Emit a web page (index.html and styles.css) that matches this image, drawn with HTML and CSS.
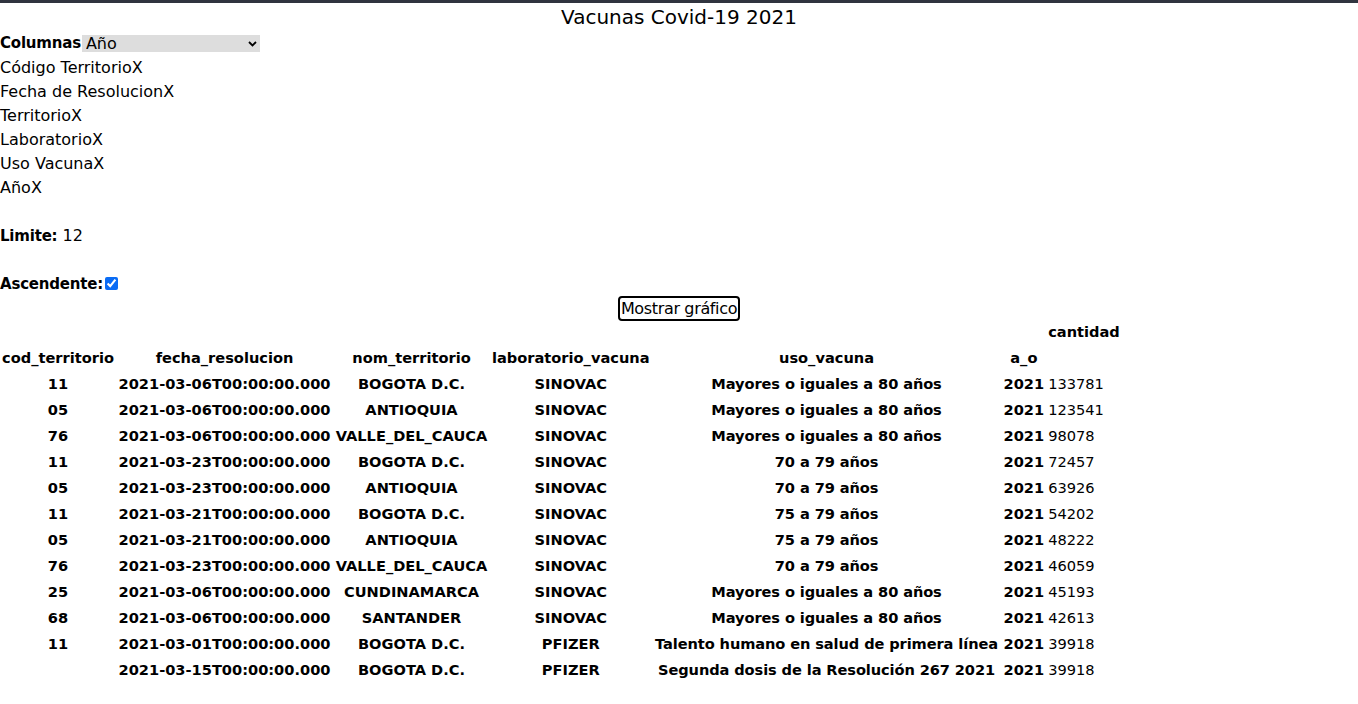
FILE: index.html
```html
<!DOCTYPE html>
<html lang="es">
<head>
<meta charset="utf-8">
<title>Vacunas Covid-19 2021</title>
<link rel="stylesheet" href="styles.css">
</head>
<body>
<div class="topbar"></div>
<h1 class="title">Vacunas Covid-19 2021</h1>
<div class="controls">
  <div class="line">
    <label class="lbl" for="cols">Columnas</label><span class="select-wrap"><select id="cols" class="select"><option>Año</option></select><svg class="chev" width="9" height="6" viewBox="0 0 9 6"><path d="M1 1l3.5 3.5L8 1" fill="none" stroke="#000" stroke-width="1.8"/></svg></span>
  </div>
  <ul class="chips">
    <li>Código TerritorioX</li>
    <li>Fecha de ResolucionX</li>
    <li>TerritorioX</li>
    <li>LaboratorioX</li>
    <li>Uso VacunaX</li>
    <li>AñoX</li>
  </ul>
  <div class="line spaced"><span class="lbl">Limite:</span> 12</div>
  <div class="line spaced"><span class="lbl">Ascendente:</span><input class="check" type="checkbox" checked></div>
  <div class="btn-row"><button class="btn" type="button">Mostrar gráfico</button></div>
</div>
<table class="grid">
  <thead>
    <tr>
      <th></th><th></th><th></th><th></th><th></th><th></th><th class="qty-h">cantidad</th>
    </tr>
    <tr>
      <th class="w1">cod_territorio</th>
      <th class="w2">fecha_resolucion</th>
      <th class="w3">nom_territorio</th>
      <th class="w4">laboratorio_vacuna</th>
      <th class="w5">uso_vacuna</th>
      <th class="w6">a_o</th>
      <th></th>
    </tr>
  </thead>
  <tbody>
    <tr><td>11</td><td>2021-03-06T00:00:00.000</td><td>BOGOTA D.C.</td><td>SINOVAC</td><td class="uso">Mayores o iguales a 80 años</td><td>2021</td><td class="qty">133781</td></tr>
    <tr><td>05</td><td>2021-03-06T00:00:00.000</td><td>ANTIOQUIA</td><td>SINOVAC</td><td class="uso">Mayores o iguales a 80 años</td><td>2021</td><td class="qty">123541</td></tr>
    <tr><td>76</td><td>2021-03-06T00:00:00.000</td><td>VALLE_DEL_CAUCA</td><td>SINOVAC</td><td class="uso">Mayores o iguales a 80 años</td><td>2021</td><td class="qty">98078</td></tr>
    <tr><td>11</td><td>2021-03-23T00:00:00.000</td><td>BOGOTA D.C.</td><td>SINOVAC</td><td class="uso">70 a 79 años</td><td>2021</td><td class="qty">72457</td></tr>
    <tr><td>05</td><td>2021-03-23T00:00:00.000</td><td>ANTIOQUIA</td><td>SINOVAC</td><td class="uso">70 a 79 años</td><td>2021</td><td class="qty">63926</td></tr>
    <tr><td>11</td><td>2021-03-21T00:00:00.000</td><td>BOGOTA D.C.</td><td>SINOVAC</td><td class="uso">75 a 79 años</td><td>2021</td><td class="qty">54202</td></tr>
    <tr><td>05</td><td>2021-03-21T00:00:00.000</td><td>ANTIOQUIA</td><td>SINOVAC</td><td class="uso">75 a 79 años</td><td>2021</td><td class="qty">48222</td></tr>
    <tr><td>76</td><td>2021-03-23T00:00:00.000</td><td>VALLE_DEL_CAUCA</td><td>SINOVAC</td><td class="uso">70 a 79 años</td><td>2021</td><td class="qty">46059</td></tr>
    <tr><td>25</td><td>2021-03-06T00:00:00.000</td><td>CUNDINAMARCA</td><td>SINOVAC</td><td class="uso">Mayores o iguales a 80 años</td><td>2021</td><td class="qty">45193</td></tr>
    <tr><td>68</td><td>2021-03-06T00:00:00.000</td><td>SANTANDER</td><td>SINOVAC</td><td class="uso">Mayores o iguales a 80 años</td><td>2021</td><td class="qty">42613</td></tr>
    <tr><td>11</td><td>2021-03-01T00:00:00.000</td><td>BOGOTA D.C.</td><td>PFIZER</td><td class="uso">Talento humano en salud de primera línea</td><td>2021</td><td class="qty">39918</td></tr>
    <tr><td></td><td>2021-03-15T00:00:00.000</td><td>BOGOTA D.C.</td><td>PFIZER</td><td class="uso">Segunda dosis de la Resolución 267 2021</td><td>2021</td><td class="qty">39918</td></tr>
  </tbody>
</table>
</body>
</html>
```

FILE: styles.css
```css
html, body {
  margin: 0;
  padding: 0;
  background: #ffffff;
}

body {
  font-family: "DejaVu Sans", "Liberation Sans", sans-serif;
  font-size: 16px;
  color: #000000;
}

.topbar {
  height: 3px;
  background: #30343f;
}

.title {
  margin: 0;
  font-size: 20px;
  font-weight: normal;
  line-height: 28px;
  text-align: center;
}

.controls {
  display: flex;
  flex-direction: column;
}

.line {
  line-height: 24px;
  height: 24px;
  white-space: nowrap;
}

.chips {
  list-style: none;
  margin: 1px 0 0;
  padding: 0;
}

.chips li {
  line-height: 24px;
  height: 24px;
}

.spaced {
  margin-top: 24px;
}

.lbl {
  font-weight: bold;
  font-size: 15px;
  letter-spacing: -0.2px;
}

.select-wrap {
  position: relative;
  display: inline-block;
  vertical-align: middle;
  margin-left: 1px;
  height: 17px;
}

.select {
  appearance: none;
  -webkit-appearance: none;
  display: block;
  width: 178px;
  height: 17px;
  margin: 0;
  padding: 0 0 0 4px;
  border: none;
  border-radius: 0;
  background: #dddddd;
  font-family: "DejaVu Sans", "Liberation Sans", sans-serif;
  font-size: 16px;
  line-height: 17px;
  color: #000000;
}

.chev {
  position: absolute;
  right: 3px;
  top: 6px;
  pointer-events: none;
}

.check {
  width: 13px;
  height: 13px;
  margin: 0 0 0 2px;
  vertical-align: -1px;
  accent-color: #0a6cf5;
}

.btn-row {
  display: flex;
  justify-content: center;
  align-items: flex-start;
  height: 21px;
}

.btn {
  height: 25px;
  margin: 0;
  padding: 0 1px;
  border: 2px solid #000000;
  border-radius: 4px;
  background: #ffffff;
  font-family: "DejaVu Sans", "Liberation Sans", sans-serif;
  font-size: 16px;
  letter-spacing: -0.35px;
  color: #000000;
  line-height: 19px;
}

.grid {
  border-spacing: 0 2px;
  font-size: 14.6px;
  font-weight: bold;
}

.grid th,
.grid td {
  padding: 1px 2px;
  height: 22px;
  text-align: center;
  white-space: nowrap;
}

.grid th.qty-h {
  text-align: left;
  width: 70px;
}

.grid td.qty {
  font-weight: normal;
  text-align: left;
}

.grid td.uso {
  letter-spacing: -0.1px;
}

.w1 { width: 112px; }
.w2 { width: 213px; }
.w3 { width: 153px; }
.w4 { width: 157px; }
.w5 { width: 346px; }
.w6 { width: 40px; }
```
